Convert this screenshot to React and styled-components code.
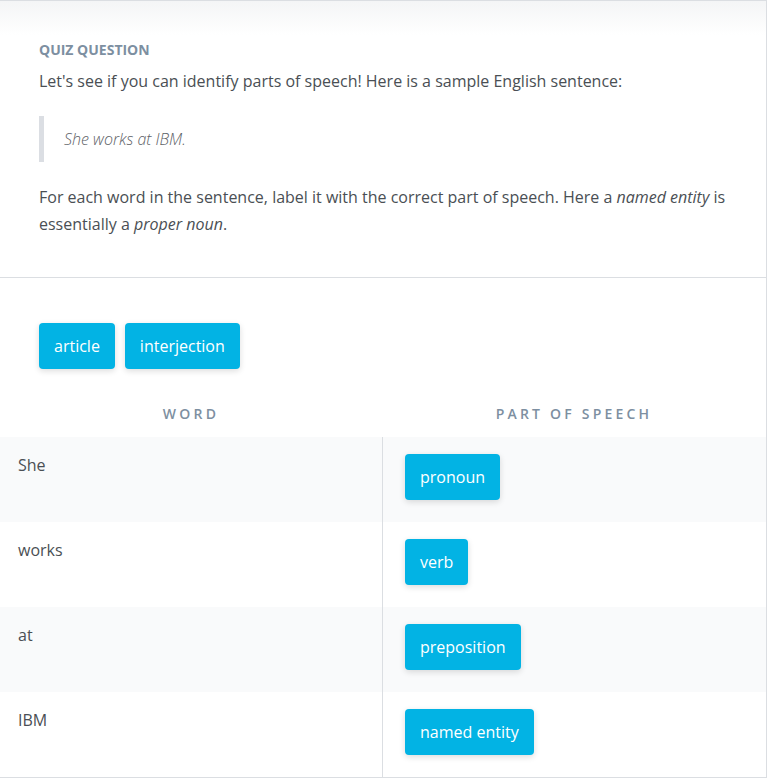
import React from "react";
import styled, { createGlobalStyle } from "styled-components";

const GlobalStyle = createGlobalStyle`
  body {
    margin: 0;
    background: #fff;
    font-family: "Open Sans", "Liberation Sans", sans-serif;
  }
`;

const Card = styled.div`
  width: 766px;
  border-top: 1px solid #dbdee2;
  border-right: 1px solid #dbdee2;
  border-bottom: 1px solid #dbdee2;
  background: #fff;
`;

const Question = styled.section`
  padding: 39px 39px 39px;
  background: linear-gradient(#f4f5f6, #ffffff 34px);
  border-bottom: 1px solid #dbdee2;
  color: #4a4f54;
`;

const Eyebrow = styled.h5`
  margin: 0;
  font-size: 14px;
  line-height: 20px;
  font-weight: 700;
  color: #7d8fa1;
  text-transform: uppercase;
`;

const Text = styled.p`
  margin: ${(p) => p.top || 0}px 0 0;
  font-size: 16px;
  line-height: 27px;
`;

const Quote = styled.blockquote`
  margin: 21px 0 0;
  height: 46px;
  display: flex;
  align-items: center;
  padding-left: 20px;
  border-left: 5px solid #dbdee3;
  font-size: 16px;
  font-style: italic;
  font-weight: 300;
  color: #5d6166;
`;

const Answer = styled.section`
  padding-top: 45px;
`;

const Bank = styled.div`
  display: flex;
  gap: 10px;
  padding: 0 39px;
`;

const Chip = styled.div`
  height: 46px;
  display: inline-flex;
  align-items: center;
  padding: 0 15px;
  border-radius: 4px;
  background: #02b3e4;
  color: #fff;
  font-size: 16px;
  box-shadow: 0 2px 6px rgba(0, 0, 0, 0.14);
`;

const Grid = styled.div`
  display: grid;
  grid-template-columns: 382px 1fr;
  margin-top: 20px;
`;

const Head = styled.div`
  height: 48px;
  display: flex;
  align-items: center;
  justify-content: center;
  font-size: 14px;
  font-weight: 600;
  letter-spacing: 3.2px;
  color: #7d8fa1;
`;

const Cell = styled.div`
  height: 85px;
  box-sizing: border-box;
  background: ${(p) => (p.shade ? "#f9fafb" : "#fff")};
  border-left: ${(p) => (p.right ? "1px solid #dbdee2" : "none")};
  padding: ${(p) => (p.right ? "17px 22px" : "16px 18px")};
  font-size: 16px;
  line-height: 24px;
  color: #4a4f54;
`;

const rows = [
  ["She", "pronoun"],
  ["works", "verb"],
  ["at", "preposition"],
  ["IBM", "named entity"],
];

export default function App() {
  return (
    <>
      <GlobalStyle />
      <Card>
        <Question>
          <Eyebrow>Quiz Question</Eyebrow>
          <Text top={8}>
            Let's see if you can identify parts of speech! Here is a sample
            English sentence:
          </Text>
          <Quote>She works at IBM.</Quote>
          <Text top={22}>
            For each word in the sentence, label it with the correct part of
            speech. Here a <em>named entity</em> is essentially a{" "}
            <em>proper noun</em>.
          </Text>
        </Question>
        <Answer>
          <Bank>
            <Chip>article</Chip>
            <Chip>interjection</Chip>
          </Bank>
          <Grid>
            <Head>WORD</Head>
            <Head>PART OF SPEECH</Head>
            {rows.map(([word, pos], i) => (
              <React.Fragment key={word}>
                <Cell shade={i % 2 === 0}>{word}</Cell>
                <Cell shade={i % 2 === 0} right>
                  <Chip>{pos}</Chip>
                </Cell>
              </React.Fragment>
            ))}
          </Grid>
        </Answer>
      </Card>
    </>
  );
}
